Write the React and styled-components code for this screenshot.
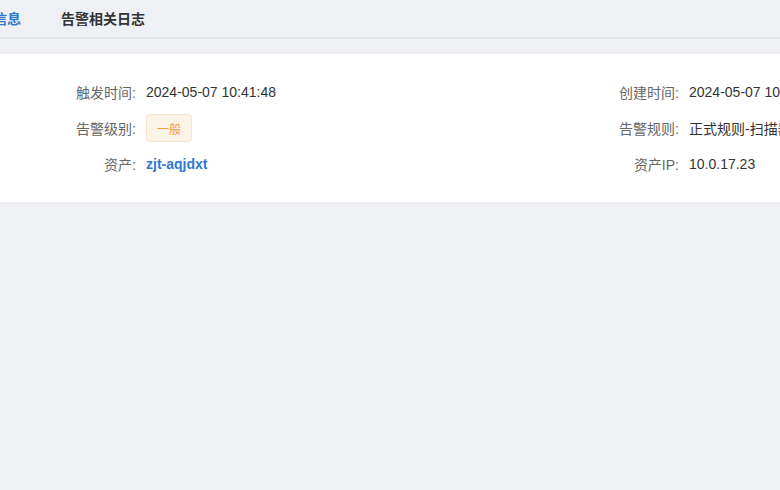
import React from "react";
import styled, { createGlobalStyle } from "styled-components";

const GlobalStyle = createGlobalStyle`
  html, body {
    margin: 0;
    padding: 0;
    background: #eff0f4;
    overflow: hidden;
  }
  body {
    font-family: "Liberation Sans", "Noto Sans CJK SC", sans-serif;
    font-size: 14px;
    color: #333;
  }
`;

const Page = styled.div`
  width: 780px;
  height: 490px;
  overflow: hidden;
`;

// 탭 영역 (가로 스크롤된 상태)
const TabBar = styled.div`
  height: 37px;
  border-bottom: 2px solid #e3e5eb;
  overflow: hidden;
`;

const TabList = styled.div`
  display: flex;
  gap: 40px;
  height: 100%;
  margin-left: -35px;
`;

const Tab = styled.div`
  position: relative;
  height: 37px;
  line-height: 38px;
  font-size: 14px;
  font-weight: 600;
  white-space: nowrap;
  color: ${(p) => (p.$active ? "#2f79d0" : "#333")};

  &::after {
    content: "";
    display: ${(p) => (p.$active ? "block" : "none")};
    position: absolute;
    left: 0;
    right: 0;
    bottom: -2px;
    height: 2px;
    background: #2f79d0;
  }
`;

const Card = styled.div`
  margin-top: 15px;
  background: #fff;
  padding: 24px 0;
`;

const Grid = styled.div`
  display: grid;
  grid-template-columns: 136px 387px 136px 1fr;
  grid-auto-rows: 28px;
  column-gap: 10px;
  row-gap: 8px;
  align-items: center;
`;

const Label = styled.div`
  text-align: right;
  color: #666;
  white-space: nowrap;
`;

const Value = styled.div`
  color: #333;
  white-space: nowrap;
`;

const LevelTag = styled.span`
  display: inline-flex;
  align-items: center;
  justify-content: center;
  width: 46px;
  height: 28px;
  box-sizing: border-box;
  border: 1px solid #fae4c8;
  border-radius: 4px;
  background: #fdf4e8;
  color: #f0a035;
  font-size: 12px;
  vertical-align: middle;
`;

const AssetLink = styled.a`
  color: #2f79d0;
  font-weight: 600;
  text-decoration: none;
`;

const rows = [
  {
    left: ["触发时间:", "2024-05-07 10:41:48"],
    right: ["创建时间:", "2024-05-07 10:41:48"],
  },
  {
    left: ["告警级别:", <LevelTag>一般</LevelTag>],
    right: ["告警规则:", "正式规则-扫描器检测"],
  },
  {
    left: ["资产:", <AssetLink href="#">zjt-aqjdxt</AssetLink>],
    right: ["资产IP:", "10.0.17.23"],
  },
];

const App = () => {
  return (
    <Page>
      <GlobalStyle />
      <TabBar>
        <TabList>
          <Tab $active>基本信息</Tab>
          <Tab>告警相关日志</Tab>
        </TabList>
      </TabBar>

      <Card>
        <Grid>
          {rows.map((it, idx) => (
            <React.Fragment key={idx}>
              <Label>{it.left[0]}</Label>
              <Value>{it.left[1]}</Value>
              <Label>{it.right[0]}</Label>
              <Value>{it.right[1]}</Value>
            </React.Fragment>
          ))}
        </Grid>
      </Card>
    </Page>
  );
};

export default App;
